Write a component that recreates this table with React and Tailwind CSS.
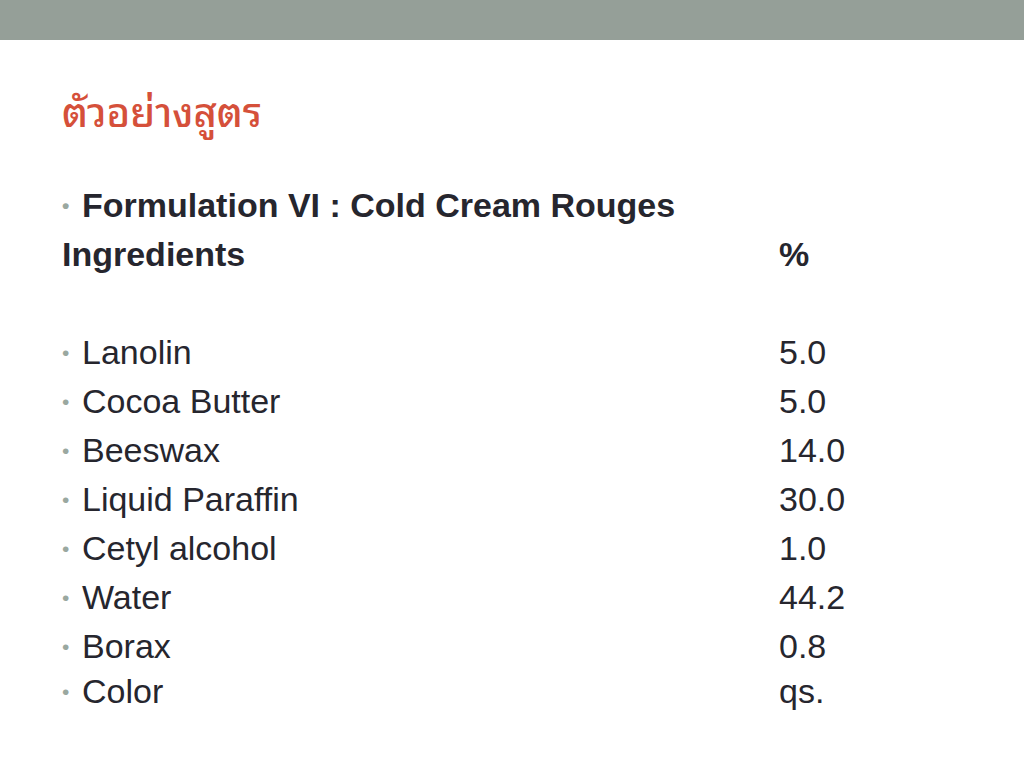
const ROWS = [
  ['Lanolin', '5.0'],
  ['Cocoa Butter', '5.0'],
  ['Beeswax', '14.0'],
  ['Liquid Paraffin', '30.0'],
  ['Cetyl alcohol', '1.0'],
  ['Water', '44.2'],
  ['Borax', '0.8'],
];

const Bullet = () => (
  <span className="inline-block w-[20px] shrink-0 text-[#9aa8a0] text-[21px] leading-none">•</span>
);

export default function App() {
  return (
    <div className="w-[1024px] h-[768px] bg-white overflow-hidden font-[Liberation_Sans,Arial,sans-serif]">
      <div className="h-[40px] bg-[#959f98]" />

      <div className="pl-[62px]">
        <h1 className="mt-[44px] h-[50px] text-[40px] leading-[50px] font-medium text-[#d5503a] font-[Noto_Sans_Thai_Looped,Loma,Garuda,Tlwg_Typo,Noto_Sans_Thai,sans-serif]">
          ตัวอย่างสูตร
        </h1>

        <div className="mt-[47px] text-[34px] text-[#26262e]">
          <div className="flex items-center h-[49px] font-bold">
            <Bullet />
            <span>Formulation VI : Cold Cream Rouges</span>
          </div>
          <div className="flex items-center h-[49px] font-bold">
            <span className="w-[717px]">Ingredients</span>
            <span>%</span>
          </div>
          <div className="h-[49px]" />
          {ROWS.map(([name, value]) => (
            <div key={name} className="flex items-center h-[49px]">
              <Bullet />
              <span className="w-[697px]">{name}</span>
              <span>{value}</span>
            </div>
          ))}
          <div className="flex items-center h-[41px]">
            <Bullet />
            <span className="w-[697px]">Color</span>
            <span>qs.</span>
          </div>
        </div>
      </div>
    </div>
  );
}
